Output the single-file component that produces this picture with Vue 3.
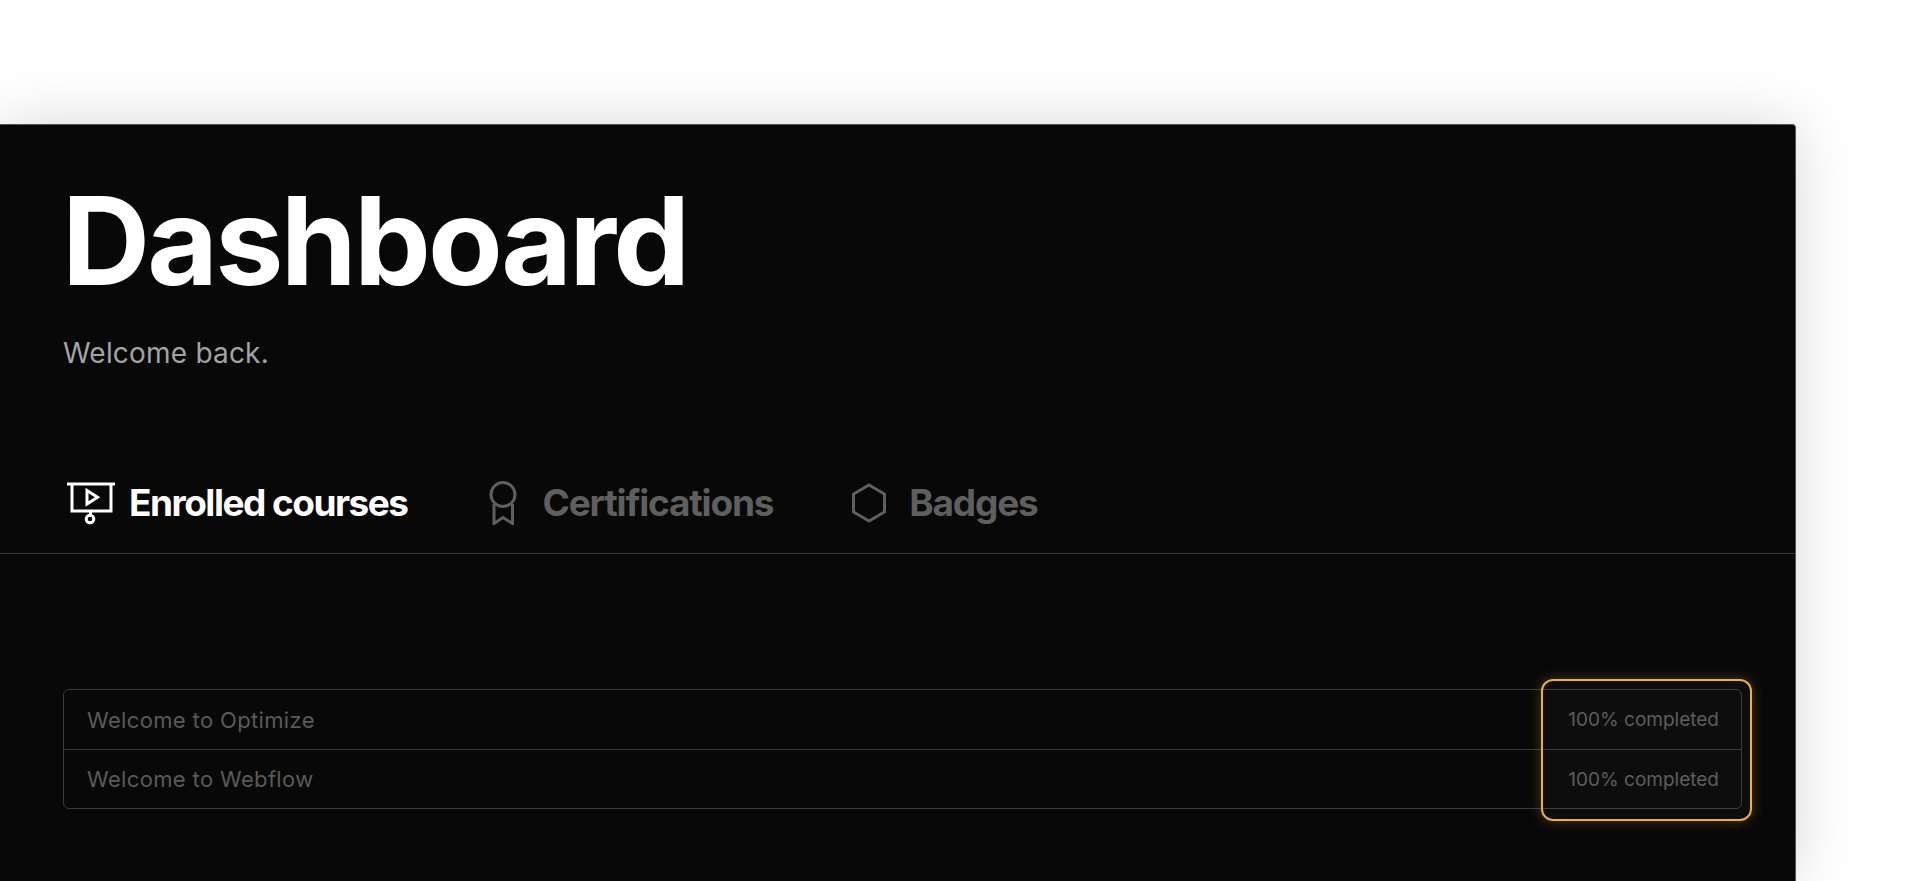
<script setup>
const tabs = [
  { id: 'courses', label: 'Enrolled courses', active: true },
  { id: 'certs', label: 'Certifications', active: false },
  { id: 'badges', label: 'Badges', active: false }
]

const courses = [
  { name: 'Welcome to Optimize', progress: 100 },
  { name: 'Welcome to Webflow', progress: 100 }
]
</script>

<template>
  <div class="page">
    <main class="panel">
      <header class="head">
        <h1>Dashboard</h1>
        <p>Welcome back.</p>
      </header>

      <nav class="tabs">
        <button v-for="tab in tabs" :key="tab.id" type="button" class="tab" :class="[tab.id, { active: tab.active }]">
          <svg v-if="tab.id === 'courses'" class="icon" width="48" height="44" viewBox="0 0 48 44" fill="none" stroke="currentColor" stroke-width="3">
            <path d="M0 3h48" />
            <path d="M5 3v27h39V3" />
            <path d="M20 9.500v13.500l10.500-6.700z" />
            <path d="M23.500 30v4.500" />
            <circle cx="23" cy="38" r="3.800" />
          </svg>
          <svg v-else-if="tab.id === 'certs'" class="icon" width="28" height="44" viewBox="0 0 28 44" fill="none" stroke="currentColor" stroke-width="3">
            <circle cx="14" cy="13.500" r="12" />
            <path d="M5 23v19.500l9-6 9.500 6V23" />
          </svg>
          <svg v-else class="icon" width="36" height="40" viewBox="0 0 36 40" fill="none" stroke="currentColor" stroke-width="3">
            <path d="M18 2l15.500 9v18L18 38 2.500 29V11z" />
          </svg>
          <span class="label">{{ tab.label }}</span>
        </button>
      </nav>

      <section class="table-wrap">
        <div class="table">
          <div v-for="course in courses" :key="course.name" class="row">
            <span class="name">{{ course.name }}</span>
            <span class="progress">{{ course.progress }}% completed</span>
          </div>
          <div class="highlight"></div>
        </div>
      </section>
    </main>
  </div>
</template>

<style>
html,
body {
  margin: 0;
  background: #ffffff;
  overflow: hidden;
}
</style>

<style scoped>
.page {
  height: 881px;
  padding-top: 124px;
  box-sizing: border-box;
  background: #ffffff;
  overflow: hidden;
  font-family: Inter, "Liberation Sans", sans-serif;
}

.panel {
  width: 1796px;
  height: 757px;
  box-sizing: border-box;
  border-top: 1px solid #555555;
  border-right: 1px solid #555555;
  border-top-right-radius: 4px;
  background: #080808;
  box-shadow: 0 0 60px rgba(0, 0, 0, 0.16);
}

.head {
  padding: 61px 0 0 62px;
}

.head h1 {
  margin: 0;
  color: #ffffff;
  font-size: 122px;
  font-weight: 700;
  line-height: 110px;
  letter-spacing: -2.8px;
}

.head p {
  margin: 40px 0 0 1px;
  color: #a3a3a3;
  font-size: 28px;
  line-height: 34px;
  letter-spacing: 0.2px;
}

.tabs {
  display: flex;
  align-items: center;
  gap: 78px;
  height: 100px;
  margin-top: 83px;
  padding-left: 67px;
  border-bottom: 1px solid #3a3a3a;
}

.tab {
  display: flex;
  align-items: center;
  gap: 26px;
  border: 0;
  padding: 0;
  background: none;
  color: #5f5f5f;
  font-family: inherit;
  font-size: 37px;
  font-weight: 700;
  letter-spacing: -1.2px;
}

.tab.active {
  gap: 14px;
  margin-right: 3px;
  color: #ffffff;
  letter-spacing: -1.5px;
}

.tab.badges {
  gap: 22px;
}

.label {
  margin-top: -2px;
}

.table-wrap {
  padding: 135px 53px 0 63px;
}

.table {
  position: relative;
  border: 1px solid #3a3a3a;
  border-radius: 6px;
}

.row {
  display: flex;
  align-items: center;
  justify-content: space-between;
  height: 59px;
  padding: 0 22px 0 23px;
  color: #5a5a5a;
  font-size: 22px;
  letter-spacing: 0.35px;
}

.row + .row {
  height: 58px;
  border-top: 1px solid #3a3a3a;
}

.progress {
  font-size: 19px;
  letter-spacing: 0;
}

.highlight {
  position: absolute;
  top: -11px;
  right: -11px;
  bottom: -13px;
  width: 207px;
  border: 2px solid #f2ad3c;
  border-radius: 12px;
  background: rgba(255, 255, 255, 0.022);
  box-shadow: 0 0 14px rgba(242, 173, 60, 0.28);
}
</style>
